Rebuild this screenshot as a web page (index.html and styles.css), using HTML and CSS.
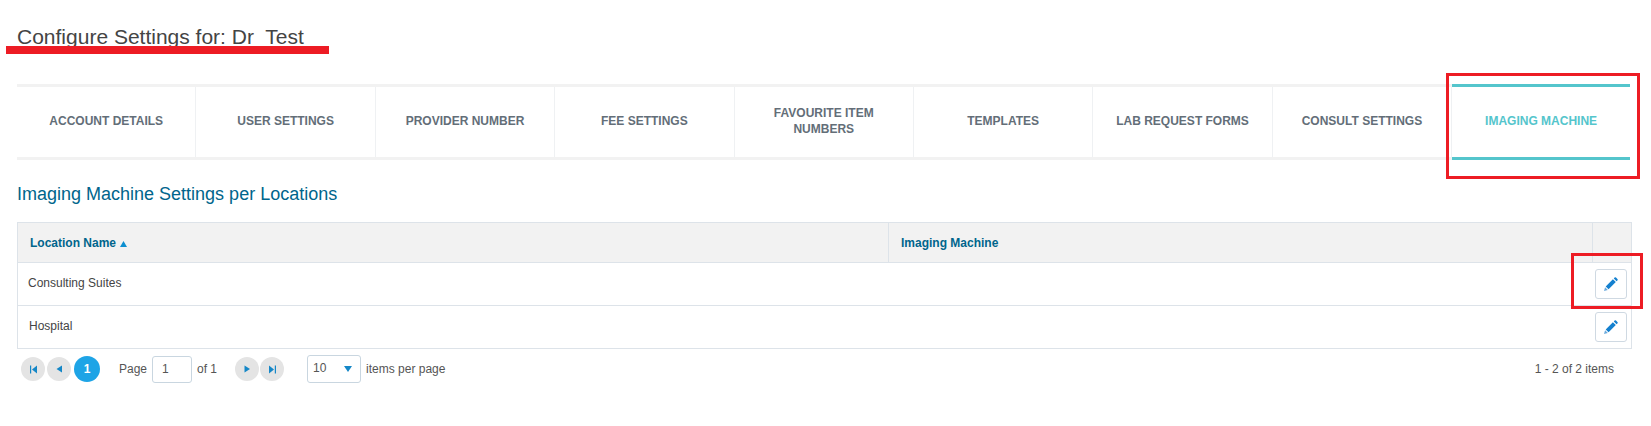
FILE: index.html
```html
<!DOCTYPE html>
<html lang="en">
<head>
<meta charset="utf-8">
<title>Configure Settings</title>
<link rel="stylesheet" href="styles.css">
</head>
<body>
<main class="page">
  <h1 class="title">Configure Settings for: Dr&nbsp; Test</h1>
  <nav class="tabs">
    <a class="tab">Account Details</a>
    <a class="tab">User Settings</a>
    <a class="tab">Provider Number</a>
    <a class="tab">Fee Settings</a>
    <a class="tab">Favourite Item Numbers</a>
    <a class="tab">Templates</a>
    <a class="tab">Lab Request Forms</a>
    <a class="tab">Consult Settings</a>
    <a class="tab tab-active">Imaging Machine</a>
  </nav>
  <h2 class="section-title">Imaging Machine Settings per Locations</h2>
  <table class="grid">
    <colgroup><col class="col-name"><col class="col-machine"><col class="col-action"></colgroup>
    <thead>
      <tr>
        <th>Location Name <svg class="sort" width="7" height="6" viewBox="0 0 7 6"><path d="M3.5 0 7 6H0z"/></svg></th>
        <th>Imaging Machine</th>
        <th></th>
      </tr>
    </thead>
    <tbody>
      <tr class="row-first">
        <td>Consulting Suites</td><td></td>
        <td class="cell-action"><button class="edit"><svg width="14" height="14" viewBox="0 0 14 14"><path class="pencil" d="M10.600.6a1 1 0 0 1 1.400 0l1.400 1.400a1 1 0 0 1 0 1.400L12.600 4.200 9.800 1.400zM8.900 2.200 11.800 5.100 4.600 12.300 1.700 9.400z"/><path class="pencil-tip" d="M1.100 10.200 3.800 12.900 0 14z"/></svg></button></td>
      </tr>
      <tr>
        <td class="cell-hospital">Hospital</td><td></td>
        <td class="cell-action"><button class="edit"><svg width="14" height="14" viewBox="0 0 14 14"><path class="pencil" d="M10.600.6a1 1 0 0 1 1.400 0l1.400 1.400a1 1 0 0 1 0 1.400L12.600 4.200 9.800 1.400zM8.900 2.200 11.800 5.100 4.600 12.300 1.700 9.400z"/><path class="pencil-tip" d="M1.100 10.200 3.800 12.900 0 14z"/></svg></button></td>
      </tr>
    </tbody>
  </table>
  <div class="pager">
    <div class="pager-group">
      <span class="nav"><svg width="7" height="9" viewBox="0 0 7 9"><path d="M0 .5h1.200v8H0zM7 .5v8L2 4.500z"/></svg></span>
      <span class="nav nav-b"><svg width="6" height="8" viewBox="0 0 6 8"><path d="M6 .5v7L.5 4z"/></svg></span>
      <span class="current">1</span>
    </div>
    <label class="page-label">Page</label>
    <span class="page-input">1</span>
    <span class="of">of 1</span>
    <div class="pager-group group-next">
      <span class="nav"><svg width="6" height="8" viewBox="0 0 6 8"><path d="M.5.5v7L6 4z"/></svg></span>
      <span class="nav nav-c"><svg width="7" height="9" viewBox="0 0 7 9"><path d="M5.800.5H7v8H5.800zM0 .5v8l5-4z"/></svg></span>
    </div>
    <span class="size"><span class="size-value">10</span><svg width="8" height="6" viewBox="0 0 8 6"><path d="M0 0h8L4 6z"/></svg></span>
    <span class="per">items per page</span>
    <span class="count">1 - 2 of 2 items</span>
  </div>
</main>
<div class="mark mark-line"></div>
<div class="mark mark-tab"></div>
<div class="mark mark-edit"></div>
</body>
</html>
```

FILE: styles.css
```css
* { box-sizing: border-box; }
html, body { margin: 0; padding: 0; background: #fff; }
body { position: relative; width: 1651px; height: 426px; overflow: hidden; font-family: "Liberation Sans", Arial, sans-serif; font-size: 12px; color: #444; }
.page { padding: 25px 19px 0 17px; }
.title { margin: 0; font-size: 21px; line-height: 24px; font-weight: 400; color: #444; }
.tabs { display: grid; grid-template-columns: repeat(8, 179.4px) 1fr; height: 76px; margin-top: 35px; margin-right: 2px; border-top: 3px solid #f2f2f2; border-bottom: 3px solid #f2f2f2; }
.tab { display: flex; align-items: center; justify-content: center; padding: 0 10px 2px; text-align: center; border-right: 1px solid #eff1f3; font-size: 12px; line-height: 16px; font-weight: 700; text-transform: uppercase; color: #636e78; }
.tab-active { margin: -3px 0; border-right: 0; border-top: 3px solid #54c5cc; border-bottom: 3px solid #54c5cc; color: #54c5cc; }
.section-title { margin: 24px 0 0; font-size: 18px; line-height: 20px; font-weight: 400; color: #00658c; }
.grid { width: 100%; margin-top: 18px; border-collapse: collapse; table-layout: fixed; }
.col-name { width: 871px; }
.col-action { width: 39px; }
.grid th, .grid td { padding: 0; border: 1px solid #dde3e9; }
.grid th { height: 40px; padding-left: 12px; background: #f2f2f2; text-align: left; font-size: 12px; font-weight: 700; color: #00658c; }
.sort { fill: #0d8fd0; margin-left: 1px; }
.grid tbody td { height: 43px; padding: 0 0 2px 10px; border-left-color: transparent; border-right-color: transparent; font-size: 12px; color: #444; }
.grid tbody td:first-child { border-left-color: #dde3e9; }
.grid tbody td.cell-hospital { padding-left: 11px; }
.grid tbody td:last-child { border-right-color: #dde3e9; }
.grid tbody td.cell-action { padding: 0 4px 0 0; text-align: right; }
.edit { display: inline-flex; align-items: center; justify-content: center; width: 32px; height: 30px; padding: 0; vertical-align: middle; background: #fff; border: 1px solid #cfd9e2; border-radius: 3px; }
.pencil { fill: #1480cf; }
.pencil-tip { fill: #6aa9dc; }
.pager { display: flex; align-items: center; height: 26px; margin-top: 7px; padding-left: 4px; font-size: 12px; color: #555; }
.pager-group { display: flex; align-items: center; gap: 2px; }
.nav { display: flex; align-items: center; justify-content: center; width: 24px; height: 24px; border-radius: 50%; background: #e4e4e4; }
.nav svg { fill: #1587c7; }
.current { display: flex; align-items: center; justify-content: center; width: 26px; height: 26px; margin-left: 1px; border-radius: 50%; background: #1ea4e6; color: #fff; font-weight: 700; font-size: 12px; }
.page-label { margin-left: 19px; }
.page-input { display: flex; align-items: center; width: 40px; height: 27px; margin-left: 5px; padding-left: 9px; border: 1px solid #c9d6e0; border-radius: 3px; }
.of { margin-left: 5px; }
.group-next { margin-left: 18px; gap: 1px; }
.size { display: flex; align-items: center; justify-content: space-between; width: 54px; height: 28px; margin-left: 23px; padding: 0 8px 0 5px; border: 1px solid #c9d6e0; border-radius: 3px; }
.size-value { padding-bottom: 2px; }
.size svg { fill: #1587c7; }
.per { margin-left: 5px; }
.count { margin-left: auto; margin-right: 18px; }
.mark { position: absolute; }
.mark-line { left: 6px; top: 46px; width: 323px; height: 8px; background: #ed1c24; }
.mark-tab { left: 1446px; top: 73px; width: 194px; height: 106px; border: 3px solid #ed1c24; }
.mark-edit { left: 1571px; top: 253px; width: 72px; height: 56px; border: 3px solid #ed1c24; }
```
